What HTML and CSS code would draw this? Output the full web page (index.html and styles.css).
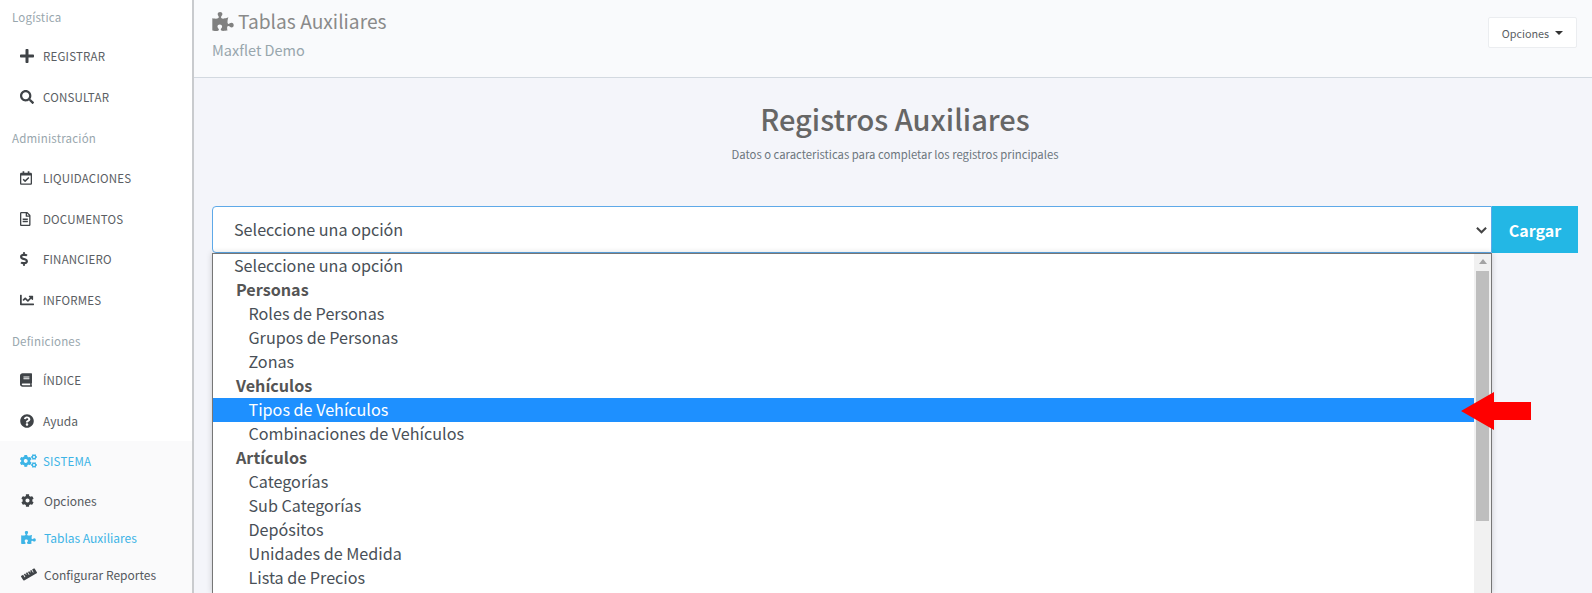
FILE: index.html
```html
<!DOCTYPE html>
<html lang="es">
<head>
<meta charset="utf-8">
<title>Tablas Auxiliares</title>
<link rel="stylesheet" href="styles.css">
</head>
<body>
<svg class="defs" width="0" height="0" aria-hidden="true">
  <defs>
    <path id="cog" d="M487.4 315.7l-42.6-24.6c4.3-23.2 4.3-47 0-70.2l42.6-24.6c4.9-2.8 7.1-8.6 5.5-14-11.1-35.6-30-67.8-54.7-94.6-3.8-4.1-10-5.1-14.8-2.3L380.8 110c-17.9-15.4-38.5-27.3-60.8-35.1V25.8c0-5.6-3.9-10.5-9.4-11.7-36.7-8.2-74.3-7.8-109.2 0-5.5 1.2-9.4 6.1-9.4 11.7V75c-22.2 7.9-42.8 19.8-60.8 35.1L88.7 85.5c-4.9-2.8-11-1.9-14.8 2.3-24.7 26.7-43.6 58.9-54.7 94.6-1.7 5.4.6 11.2 5.5 14L67.3 221c-4.3 23.2-4.3 47 0 70.2l-42.6 24.6c-4.9 2.8-7.1 8.6-5.5 14 11.1 35.6 30 67.8 54.7 94.6 3.8 4.1 10 5.1 14.8 2.3l42.6-24.6c17.9 15.4 38.5 27.3 60.8 35.1v49.2c0 5.6 3.9 10.5 9.4 11.7 36.7 8.2 74.3 7.8 109.2 0 5.5-1.2 9.4-6.1 9.4-11.7v-49.2c22.2-7.9 42.8-19.8 60.8-35.1l42.6 24.6c4.9 2.8 11 1.9 14.8-2.3 24.7-26.7 43.6-58.9 54.7-94.6 1.5-5.5-.7-11.3-5.6-14.1zM256 336c-44.1 0-80-35.9-80-80s35.9-80 80-80 80 35.9 80 80-35.9 80-80 80z"/>
    <path id="puzzle" d="M519.442 288.651c-41.519 0-59.5 31.593-82.058 31.593C377.409 320.244 432 144 432 144s-196.288 80-196.288-3.297c0-35.827 36.288-46.25 36.288-85.985C272 19.216 243.885 0 210.539 0c-34.654 0-66.366 18.891-66.366 56.346 0 41.364 31.711 59.277 31.711 81.75C175.885 207.719 0 166.758 0 166.758v333.237s178.635 41.047 178.635-28.662c0-22.473-40-40.107-40-81.471 0-37.456 29.25-56.346 63.577-56.346 33.673 0 61.788 19.216 61.788 54.717 0 39.735-36.288 50.158-36.288 85.985 0 60.803 129.675 25.73 181.23 25.73 0 0-34.725-120.101 25.827-120.101 35.962 0 46.423 36.152 86.308 36.152C556.712 416 576 387.99 576 354.443c0-34.199-18.962-65.792-56.558-65.792z"/>
  </defs>
</svg>
<div class="app">
  <nav class="sidebar">
    <div class="nav-title nav-title-first">Logística</div>
    <a class="nav-item"><span class="ico"><svg viewBox="0 0 448 512" width="14" height="16"><path d="M416 208H272V64c0-17.67-14.33-32-32-32h-32c-17.67 0-32 14.33-32 32v144H32c-17.67 0-32 14.33-32 32v32c0 17.67 14.33 32 32 32h144v144c0 17.67 14.33 32 32 32h32c17.67 0 32-14.33 32-32V304h144c17.67 0 32-14.33 32-32v-32c0-17.67-14.33-32-32-32z"/></svg></span>REGISTRAR</a>
    <a class="nav-item"><span class="ico"><svg viewBox="0 0 512 512" width="14" height="14"><path d="M505 442.7L405.3 343c-4.5-4.5-10.6-7-17-7H372c27.6-35.3 44-79.7 44-128C416 93.1 322.9 0 208 0S0 93.1 0 208s93.1 208 208 208c48.3 0 92.7-16.4 128-44v16.3c0 6.4 2.5 12.5 7 17l99.7 99.7c9.4 9.4 24.6 9.4 33.9 0l28.3-28.3c9.4-9.4 9.4-24.6.1-34zM208 336c-70.7 0-128-57.2-128-128 0-70.7 57.2-128 128-128 70.7 0 128 57.2 128 128 0 70.7-57.2 128-128 128z"/></svg></span>CONSULTAR</a>
    <div class="nav-title nav-title-second">Administración</div>
    <a class="nav-item"><span class="ico"><svg viewBox="0 0 448 512" width="12" height="14"><path d="M400 64h-48V12c0-6.627-5.373-12-12-12h-40c-6.627 0-12 5.373-12 12v52H160V12c0-6.627-5.373-12-12-12h-40c-6.627 0-12 5.373-12 12v52H48C21.49 64 0 85.49 0 112v352c0 26.51 21.49 48 48 48h352c26.51 0 48-21.49 48-48V112c0-26.51-21.49-48-48-48zm-6 400H54a6 6 0 0 1-6-6V160h352v298a6 6 0 0 1-6 6zm-52.849-200.65L198.842 404.519c-4.705 4.667-12.303 4.637-16.971-.068l-75.091-75.699c-4.667-4.705-4.637-12.303.068-16.971l22.719-22.536c4.705-4.667 12.303-4.637 16.97.069l44.104 44.461 111.072-110.181c4.705-4.667 12.303-4.637 16.971.068l22.536 22.718c4.667 4.705 4.636 12.303-.069 16.97z"/></svg></span>LIQUIDACIONES</a>
    <a class="nav-item"><span class="ico"><svg viewBox="0 0 384 512" width="10.5" height="14"><path d="M288 248v28c0 6.6-5.4 12-12 12H108c-6.6 0-12-5.4-12-12v-28c0-6.6 5.4-12 12-12h168c6.6 0 12 5.4 12 12zm-12 72H108c-6.6 0-12 5.4-12 12v28c0 6.6 5.4 12 12 12h168c6.6 0 12-5.4 12-12v-28c0-6.6-5.4-12-12-12zm108-188.1V464c0 26.5-21.5 48-48 48H48c-26.5 0-48-21.5-48-48V48C0 21.5 21.5 0 48 0h204.1C264.8 0 277 5.1 286 14.1L369.9 98c9 8.9 14.1 21.2 14.1 33.9zm-128-80V128h76.1L256 51.9zM336 464V176H232c-13.3 0-24-10.7-24-24V48H48v416h288z"/></svg></span>DOCUMENTOS</a>
    <a class="nav-item"><span class="ico"><svg viewBox="0 0 288 512" width="8" height="14"><path d="M209.2 233.4l-108-31.6C88.7 198.2 80 186.5 80 173.5c0-16.3 13.2-29.5 29.5-29.5h66.3c12.2 0 24.2 3.7 34.2 10.5 6.1 4.1 14.3 3.1 19.5-2l34.8-34c7.1-6.9 6.1-18.4-1.8-24.5C238 74.8 207.4 64.1 176 64V16c0-8.8-7.2-16-16-16h-32c-8.8 0-16 7.2-16 16v48h-2.5C45.8 64-5.4 118.7.5 183.6c4.2 46.1 39.4 83.6 83.8 96.6l102.5 30c12.5 3.7 21.2 15.3 21.2 28.3 0 16.3-13.2 29.5-29.5 29.5h-66.3C100 368 88 364.3 78 357.5c-6.1-4.1-14.3-3.1-19.5 2l-34.8 34c-7.1 6.9-6.1 18.4 1.8 24.5 24.5 19.2 55.1 29.9 86.5 30v48c0 8.8 7.2 16 16 16h32c8.8 0 16-7.2 16-16v-48.2c46.6-.9 90.3-28.6 105.7-72.7 21.5-61.6-14.6-124.8-72.5-141.7z"/></svg></span>FINANCIERO</a>
    <a class="nav-item"><span class="ico"><svg viewBox="0 0 512 512" width="14" height="14"><path d="M496 384H64V80c0-8.84-7.16-16-16-16H16C7.16 64 0 71.16 0 80v336c0 17.67 14.33 32 32 32h464c8.84 0 16-7.16 16-16v-32c0-8.84-7.16-16-16-16zM464 96H345.94c-21.38 0-32.09 25.85-16.97 40.97l32.4 32.4L288 242.75l-73.37-73.37c-12.5-12.5-32.76-12.5-45.25 0l-68.69 68.69c-6.25 6.25-6.25 16.38 0 22.63l22.62 22.62c6.25 6.25 16.38 6.25 22.63 0L192 237.25l73.37 73.37c12.5 12.5 32.76 12.5 45.25 0l96-96 32.4 32.4c15.12 15.12 40.97 4.41 40.97-16.97V112c.01-8.84-7.15-16-15.99-16z"/></svg></span>INFORMES</a>
    <div class="nav-title">Definiciones</div>
    <a class="nav-item"><span class="ico"><svg viewBox="0 0 448 512" width="12" height="14"><path d="M448 360V24c0-13.3-10.7-24-24-24H96C43 0 0 43 0 96v320c0 53 43 96 96 96h328c13.3 0 24-10.7 24-24v-16c0-7.5-3.5-14.3-8.9-18.7-4.2-15.4-4.2-59.3 0-74.7 5.4-4.3 8.9-11.1 8.9-18.6zM128 134c0-3.3 2.7-6 6-6h212c3.3 0 6 2.7 6 6v20c0 3.3-2.7 6-6 6H134c-3.3 0-6-2.7-6-6v-20zm0 64c0-3.3 2.7-6 6-6h212c3.3 0 6 2.7 6 6v20c0 3.3-2.7 6-6 6H134c-3.3 0-6-2.7-6-6v-20zm253.4 250H96c-17.7 0-32-14.3-32-32 0-17.6 14.4-32 32-32h285.4c-1.9 17.1-1.9 46.9 0 64z"/></svg></span>ÍNDICE</a>
    <a class="nav-item nav-plain"><span class="ico"><svg viewBox="0 0 512 512" width="14" height="14"><path d="M504 256c0 136.997-111.043 248-248 248S8 392.997 8 256C8 119.083 119.043 8 256 8s248 111.083 248 248zM262.655 90c-54.497 0-89.255 22.957-116.549 63.758-3.536 5.286-2.353 12.415 2.715 16.258l34.699 26.31c5.205 3.947 12.621 3.008 16.665-2.122 17.864-22.658 30.113-35.797 57.303-35.797 20.429 0 45.698 13.148 45.698 32.958 0 14.976-12.363 22.667-32.534 33.976C247.128 238.528 216 254.941 216 296v4c0 6.627 5.373 12 12 12h56c6.627 0 12-5.373 12-12v-1.333c0-28.462 83.186-29.647 83.186-106.667 0-58.002-60.165-102-116.531-102zM256 338c-25.365 0-46 20.635-46 46 0 25.364 20.635 46 46 46s46-20.636 46-46c0-25.365-20.635-46-46-46z"/></svg></span>Ayuda</a>
    <div class="nav-group">
      <a class="nav-item nav-active"><span class="ico"><svg viewBox="0 0 640 512" width="17" height="14"><path d="M512.1 191l-8.2 14.3c-3 5.3-9.4 7.5-15.1 5.4-11.8-4.4-22.6-10.7-32.1-18.6-4.6-3.8-5.8-10.5-2.8-15.7l8.2-14.3c-6.9-8-12.3-17.3-15.9-27.4h-16.5c-6 0-11.2-4.3-12.2-10.3-2-12-2.1-24.6 0-37.1 1-6 6.2-10.4 12.2-10.4h16.5c3.6-10.1 9-19.4 15.9-27.4l-8.2-14.3c-3-5.2-1.9-11.9 2.8-15.7 9.5-7.9 20.4-14.2 32.1-18.6 5.7-2.1 12.1.1 15.1 5.4l8.2 14.3c10.5-1.9 21.2-1.9 31.7 0L552 6.3c3-5.3 9.4-7.5 15.1-5.4 11.8 4.4 22.6 10.7 32.1 18.6 4.6 3.8 5.8 10.5 2.8 15.7l-8.2 14.3c6.9 8 12.3 17.3 15.9 27.4h16.5c6 0 11.2 4.3 12.2 10.3 2 12 2.1 24.6 0 37.1-1 6-6.2 10.4-12.2 10.4h-16.5c-3.6 10.1-9 19.4-15.9 27.4l8.2 14.3c3 5.2 1.9 11.9-2.8 15.7-9.5 7.9-20.4 14.2-32.1 18.6-5.7 2.1-12.1-.1-15.1-5.4l-8.2-14.3c-10.4 1.9-21.2 1.9-31.7 0zm-10.5-58.8c38.5 29.6 82.4-14.3 52.8-52.8-38.5-29.7-82.4 14.3-52.8 52.8zM386.3 286.1l33.7 16.8c10.1 5.8 14.5 18.1 10.5 29.1-8.9 24.2-26.4 46.4-42.6 65.8-7.4 8.9-20.2 11.1-30.3 5.3l-29.1-16.8c-16 13.7-34.6 24.6-54.9 31.7v33.6c0 11.6-8.3 21.6-19.7 23.6-24.6 4.2-50.4 4.4-75.9 0-11.5-2-20-11.9-20-23.6V418c-20.3-7.2-38.9-18-54.9-31.7L74 403c-10 5.8-22.9 3.6-30.3-5.3-16.2-19.4-33.3-41.6-42.2-65.7-4-10.9.4-23.2 10.5-29.1l33.3-16.8c-3.9-20.9-3.9-42.4 0-63.4L12 205.8c-10.1-5.8-14.6-18.1-10.5-29 8.9-24.2 26-46.4 42.2-65.8 7.4-8.9 20.2-11.1 30.3-5.3l29.1 16.8c16-13.7 34.6-24.6 54.9-31.7V57.1c0-11.5 8.2-21.5 19.6-23.5 24.6-4.2 50.5-4.4 76-.1 11.5 2 20 11.9 20 23.6v33.6c20.3 7.2 38.9 18 54.9 31.7l29.1-16.8c10-5.8 22.9-3.6 30.3 5.3 16.2 19.4 33.2 41.6 42.1 65.8 4 10.9.1 23.2-10 29.1l-33.7 16.8c3.9 21 3.9 42.5 0 63.5zm-117.6 21.1c59.2-77-28.7-164.9-105.7-105.7-59.2 77 28.7 164.9 105.7 105.7zm243.4 182.7l-8.2 14.3c-3 5.3-9.4 7.5-15.1 5.4-11.8-4.4-22.6-10.7-32.1-18.6-4.6-3.8-5.8-10.5-2.8-15.7l8.2-14.3c-6.9-8-12.3-17.3-15.9-27.4h-16.5c-6 0-11.2-4.3-12.2-10.3-2-12-2.1-24.6 0-37.1 1-6 6.2-10.4 12.2-10.4h16.5c3.6-10.1 9-19.4 15.9-27.4l-8.2-14.3c-3-5.2-1.9-11.9 2.8-15.7 9.5-7.9 20.4-14.2 32.1-18.6 5.7-2.1 12.1.1 15.1 5.4l8.2 14.3c10.5-1.9 21.2-1.9 31.7 0l8.2-14.3c3-5.3 9.4-7.5 15.1-5.4 11.8 4.4 22.6 10.7 32.1 18.6 4.6 3.8 5.8 10.5 2.8 15.7l-8.2 14.3c6.9 8 12.3 17.3 15.9 27.4h16.5c6 0 11.2 4.3 12.2 10.3 2 12 2.1 24.6 0 37.1-1 6-6.2 10.4-12.2 10.4h-16.5c-3.6 10.1-9 19.4-15.9 27.4l8.2 14.3c3 5.2 1.9 11.9-2.8 15.7-9.5 7.9-20.4 14.2-32.1 18.6-5.7 2.1-12.1-.1-15.1-5.4l-8.2-14.3c-10.4 1.9-21.2 1.9-31.7 0zM501.6 431c38.5 29.6 82.4-14.3 52.8-52.8-38.5-29.6-82.4 14.3-52.8 52.8z"/></svg></span>SISTEMA</a>
      <a class="sub-item"><span class="ico"><svg viewBox="0 0 512 512" width="13" height="13"><use href="#cog"/></svg></span>Opciones</a>
      <a class="sub-item sub-active"><span class="ico"><svg viewBox="0 0 576 512" width="15" height="13"><use href="#puzzle"/></svg></span>Tablas Auxiliares</a>
      <a class="sub-item"><span class="ico"><svg viewBox="0 0 640 512" width="16" height="13"><path d="M635.7 167.2L556.1 31.7c-8.8-15-28.3-20.1-43.5-11.5l-69 39.1L503.3 161c2.2 3.8.9 8.5-2.9 10.7l-13.8 7.8c-3.8 2.2-8.7.9-10.9-2.9L416 75l-55.2 31.3 27.9 47.4c2.2 3.8.9 8.5-2.9 10.7l-13.8 7.8c-3.8 2.2-8.7.9-10.9-2.9L333.2 122 278 153.3 337.8 255c2.2 3.7.9 8.5-2.9 10.7l-13.8 7.8c-3.8 2.2-8.7.9-10.9-2.9l-59.7-101.7-55.2 31.3 27.9 47.4c2.2 3.8.9 8.5-2.9 10.7l-13.8 7.8c-3.8 2.2-8.7.9-10.9-2.9l-27.9-47.5-55.2 31.3 59.7 101.7c2.2 3.7.9 8.5-2.9 10.7l-13.8 7.8c-3.8 2.2-8.7.9-10.9-2.9L84.9 262.9l-69 39.1C.7 310.7-4.6 329.8 4.2 344.8l79.6 135.6c8.8 15 28.3 20.1 43.5 11.5L624.1 210c15.2-8.6 20.4-27.8 11.6-42.8z"/></svg></span>Configurar Reportes</a>
    </div>
  </nav>
  <main class="main">
    <header class="page-head">
      <div class="head-text">
        <h1 class="page-title"><svg viewBox="0 0 576 512" width="22" height="19"><use href="#puzzle"/></svg>Tablas Auxiliares</h1>
        <div class="page-sub">Maxflet Demo</div>
      </div>
      <button class="opts">Opciones<span class="caret"></span></button>
    </header>
    <section class="content">
      <h2 class="heading">Registros Auxiliares</h2>
      <p class="lead">Datos o caracteristicas para completar los registros principales</p>
      <div class="form-row">
        <div class="select-wrap">
          <div class="select"><span class="select-text">Seleccione una opción</span><svg viewBox="0 0 12 8" width="11" height="8"><path d="M1 1.5l5 5 5-5" fill="none" stroke="#444" stroke-width="2.2"/></svg></div>
          <div class="listbox">
            <div class="options">
              <div class="opt">Seleccione una opción</div>
              <div class="grp">Personas</div>
              <div class="opt-in">Roles de Personas</div>
              <div class="opt-in">Grupos de Personas</div>
              <div class="opt-in">Zonas</div>
              <div class="grp">Vehículos</div>
              <div class="opt-in selected">Tipos de Vehículos</div>
              <div class="opt-in">Combinaciones de Vehículos</div>
              <div class="grp">Artículos</div>
              <div class="opt-in">Categorías</div>
              <div class="opt-in">Sub Categorías</div>
              <div class="opt-in">Depósitos</div>
              <div class="opt-in">Unidades de Medida</div>
              <div class="opt-in">Lista de Precios</div>
            </div>
            <div class="scroll">
              <span class="scroll-up"></span>
              <span class="scroll-thumb"></span>
            </div>
          </div>
          <svg class="arrow" viewBox="0 0 70 38" width="70" height="38"><path d="M0 19L33 0V10H70V28H33V38Z" fill="#ff0000"/></svg>
        </div>
        <button class="load">Cargar</button>
      </div>
    </section>
  </main>
</div>
</body>
</html>
```

FILE: styles.css
```css
* { box-sizing: border-box; }
html, body { margin: 0; height: 593px; overflow: hidden; }
body { font-family: "Noto Sans CJK SC", "Source Sans Pro", "Open Sans", sans-serif; color: #495057; background: #f4f5fa; }
.defs { position: absolute; }
.app { display: flex; height: 593px; }

.sidebar { flex: 0 0 194px; background: #fff; border-right: 2px solid #c9cbce; display: flex; flex-direction: column; }
.nav-title { height: 40px; padding-left: 12px; padding-top: 13px; font-size: 11.5px; line-height: 17px; color: #98a6ad; letter-spacing: .2px; }
.nav-title-first { height: 36px; padding-top: 9px; }
.nav-title-second { height: 41px; }
.nav-item { display: flex; align-items: center; height: 41px; padding-left: 20px; font-size: 11.5px; letter-spacing: .2px; color: #5a5e63; }
.nav-plain { font-size: 12px; letter-spacing: 0; }
.ico { flex: 0 0 23px; display: flex; align-items: center; color: #3f4347; }
.ico svg { fill: currentColor; display: block; }
.nav-group { flex: 1; background: #fafafb; }
.nav-active, .nav-active .ico { color: #3db4e6; }
.sub-item { display: flex; align-items: center; height: 37px; padding-left: 21px; font-size: 12px; color: #55595e; }
.sub-item .ico { flex-basis: 23px; }
.sub-active, .sub-active .ico { color: #3db4e6; }

.main { flex: 1; min-width: 0; display: flex; flex-direction: column; }
.page-head { height: 78px; flex: none; background: #f9fafc; border-bottom: 1px solid #d3d9e0; padding: 0 15px 0 18px; display: flex; justify-content: space-between; align-items: flex-start; }
.page-title { margin: 8px 0 0; font-size: 19.2px; line-height: 26px; font-weight: 400; color: #8a8a8a; display: flex; align-items: center; gap: 4px; }
.page-title svg { fill: #808080; }
.page-sub { margin-top: 6px; font-size: 14.5px; line-height: 20px; color: #98a6ad; }
.opts { margin-top: 17px; width: 89px; height: 31px; background: #fff; border: 1px solid #ebedf0; border-radius: 2px; font: inherit; font-size: 10.8px; color: #5a5e63; display: flex; align-items: center; justify-content: center; gap: 6px; padding: 0; }
.caret { width: 0; height: 0; border-left: 4px solid transparent; border-right: 4px solid transparent; border-top: 4px solid #333; }

.content { padding: 0 14px 0 18px; flex: 1; }
.heading { margin: 21px 0 0; text-align: center; font-size: 29px; line-height: 38px; font-weight: 500; color: #666; }
.lead { margin: 8px 0 0; text-align: center; font-size: 11.3px; line-height: 18px; color: #6c757d; }
.form-row { margin-top: 43px; display: flex; align-items: flex-start; }
.select-wrap { flex: 1; position: relative; }
.select { height: 47px; background: #fff; border: 1px solid #5ea9e8; border-radius: 4px 0 0 4px; padding: 0 4px 0 21px; display: flex; align-items: center; justify-content: space-between; font-size: 16.15px; color: #495057; }
.select-text { line-height: 22px; margin-top: -2px; }
.listbox { position: absolute; left: 0; right: 0; top: 47px; height: 340px; overflow: hidden; background: #fff; border: 1px solid #767676; border-bottom: 0; display: flex; box-shadow: 0 0 6px rgba(0,0,0,.18); }
.options { flex: 1; min-width: 0; font-size: 16.15px; line-height: 22px; color: #495057; }
.opt { padding-left: 21px; height: 24px; }
.grp { padding-left: 23px; height: 24px; font-weight: 600; color: #555; }
.opt-in { padding-left: 35.5px; height: 24px; }
.selected { background: #1e90ff; color: #fff; }
.scroll { flex: 0 0 17px; background: #f1f1f1; position: relative; }
.scroll-up { display: block; margin: 5px auto 0; width: 0; height: 0; border-left: 4px solid transparent; border-right: 4px solid transparent; border-bottom: 5px solid #a3a3a3; }
.scroll-thumb { position: absolute; top: 17px; left: 2px; width: 13px; height: 250px; background: #bebebe; }
.arrow { position: absolute; left: 1249px; top: 186px; }
.load { flex: none; width: 86px; height: 47px; border: 0; background: #23b7e5; color: #fff; font: inherit; font-size: 16px; font-weight: 700; padding: 0; }
```
